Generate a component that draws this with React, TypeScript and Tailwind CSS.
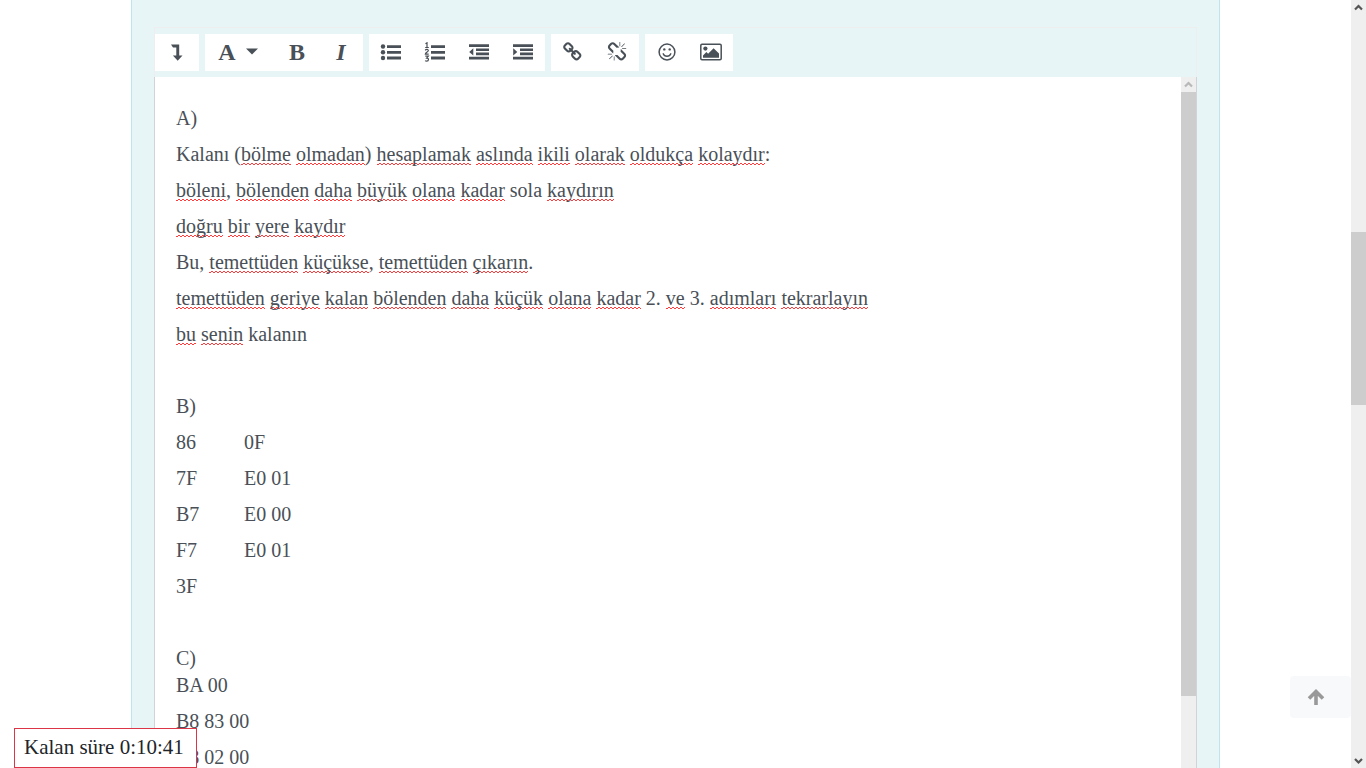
import type { ReactNode } from 'react';

const LINK_PATH =
  'M1456 1216q0-40-28-68l-208-208q-28-28-68-28-42 0-72 32 3 3 19 18.5t21.5 21.5 15 19 13 25.5 3.5 27.5q0 40-28 68t-68 28q-15 0-27.5-3.5t-25.5-13-19-15-21.5-21.5-18.5-19q-33 31-33 73 0 40 28 68l206 207q27 27 68 27 40 0 68-26l147-146q28-28 28-67zm-703-705q0-40-28-68l-206-207q-28-28-68-28-39 0-68 27l-147 146q-28 28-28 67 0 40 28 68l208 208q27 27 68 27 42 0 72-31-3-3-19-18.5t-21.5-21.5-15-19-13-25.5-3.5-27.5q0-40 28-68t68-28q15 0 27.5 3.5t25.5 13 19 15 21.5 21.5 18.5 19q33-31 33-73zm895 705q0 120-85 203l-147 146q-83 83-203 83-121 0-204-85l-206-207q-83-83-83-203 0-123 88-209l-88-88q-86 88-208 88-120 0-204-84l-208-208q-84-84-84-204t85-203l147-146q83-83 203-83 121 0 204 85l206 207q83 83 83 203 0 123-88 209l88 88q86-88 208-88 120 0 204 84l208 208q84 84 84 204z';
const UNLINK_PATH =
  'M503 1271l-256 256q-10 9-23 9-12 0-23-9-9-10-9-23t9-23l256-256q10-9 23-9t23 9q9 10 9 23t-9 23zm169 41v320q0 14-9 23t-23 9-23-9-9-23v-320q0-14 9-23t23-9 23 9 9 23zm-224-224q0 14-9 23t-23 9h-320q-14 0-23-9t-9-23 9-23 23-9h320q14 0 23 9t9 23zm1264 128q0 120-85 203l-147 146q-83 83-203 83-121 0-204-85l-334-335q-21-21-42-56l239-18 273 274q27 27 68 27.5t68-26.5l147-146q28-28 28-67 0-40-28-68l-274-275 18-239q35 21 56 42l336 336q84 86 84 204zm-617-724l-239 18-273-274q-28-28-68-28-39 0-68 27l-147 146q-28 28-28 67 0 40 28 68l274 274-18 240q-35-21-56-42l-336-336q-84-86-84-204 0-120 85-203l147-146q83-83 203-83 121 0 204 85l334 335q21 21 42 56zm633 84q0 14-9 23t-23 9h-320q-14 0-23-9t-9-23 9-23 23-9h320q14 0 23 9t9 23zm-544-544v320q0 14-9 23t-23 9-23-9-9-23v-320q0-14 9-23t23-9 23 9 9 23zm407 151l-256 256q-11 9-23 9t-23-9q-9-10-9-23t9-23l256-256q10-9 23-9t23 9q9 10 9 23t-9 23z';

function Icon({ children, box = '0 0 22 20' }: { children: ReactNode; box?: string }) {
  return (
    <svg viewBox={box} className="h-5 w-[22px]" fill="currentColor" aria-hidden="true">
      {children}
    </svg>
  );
}

const ExpandIcon = () => (
  <Icon>
    <path d="M5 2.600h8.200v10.800h3.300l-4.800 5.400-4.800-5.400h3.400V5.400H7z" />
  </Icon>
);
const BulletsIcon = () => (
  <Icon>
    <circle cx="3" cy="4.500" r="2.200" />
    <circle cx="3" cy="10.200" r="2.200" />
    <circle cx="3" cy="16" r="2.200" />
    <path d="M7 3.200h14v2.800H7zM7 8.900h14v2.800H7zM7 14.600h14v2.800H7z" />
  </Icon>
);
const NumbersIcon = () => (
  <Icon>
    <path d="M7 3.200h14v2.800H7zM7 8.900h14v2.800H7zM7 14.600h14v2.800H7z" />
    <path
      d="M1.500 1.800 3 .8v4.700M1.200 5.500h3.600M1.200 8.400c.8-1.500 3.300-1.200 3.100.3-.1 1.100-2.900 1.600-3 3.500h3.400M1.300 14.200h3l-1.600 1.900c2.500-.1 2.200 3.100 0 3.100-.8 0-1.200-.2-1.600-.6"
      fill="none"
      stroke="currentColor"
      strokeWidth="1.200"
    />
  </Icon>
);
const OutdentIcon = () => (
  <Icon>
    <path d="M1 2.200h20v2.700H1zM8 6.400h13v2.700H8zM8 10.600h13v2.700H8zM1 14.800h20v2.700H1zM5.300 6.200v7.400L1.200 9.900z" />
  </Icon>
);
const IndentIcon = () => (
  <Icon>
    <path d="M1 2.200h20v2.700H1zM8 6.400h13v2.700H8zM8 10.600h13v2.700H8zM1 14.800h20v2.700H1zM1.200 6.200v7.400l4.100-3.700z" />
  </Icon>
);
const LinkIcon = () => (
  <Icon box="0 0 1792 1792">
    <path d={LINK_PATH} />
  </Icon>
);
const UnlinkIcon = () => (
  <Icon box="0 0 1792 1792">
    <path d={UNLINK_PATH} />
  </Icon>
);
const SmileIcon = () => (
  <Icon>
    <circle cx="11" cy="10" r="7.900" fill="none" stroke="currentColor" strokeWidth="1.500" />
    <circle cx="8.300" cy="7.400" r="1.200" />
    <circle cx="13.700" cy="7.400" r="1.200" />
    <path d="M7.200 11.800c1.200 3.300 6.400 3.300 7.600 0" fill="none" stroke="currentColor" strokeWidth="1.400" strokeLinecap="round" />
  </Icon>
);
const ImageIcon = () => (
  <Icon>
    <rect x=".800" y="2.200" width="20.400" height="15.600" rx="1.200" fill="none" stroke="currentColor" strokeWidth="1.500" />
    <circle cx="5.400" cy="6.600" r="2.100" />
    <path d="M3 15.700v-2.300l3.400-3.400 1.700 1.700L13.600 6.200 19 11.600v4.100z" />
  </Icon>
);

function ToolButton({ label, children }: { label: string; children: ReactNode }) {
  return (
    <button type="button" aria-label={label} className="flex h-[37px] w-11 items-center justify-center pb-0.5">
      {children}
    </button>
  );
}

function Toolbar() {
  return (
    <div className="flex h-[50px] gap-1.5 border border-b-0 border-[#eeeeee] pt-1.5 text-[#495057]">
      <div className="flex h-[37px] bg-white">
        <ToolButton label="Daha fazla düğme göster"><ExpandIcon /></ToolButton>
      </div>
      <div className="flex h-[37px] bg-white text-2xl font-bold">
        <button type="button" aria-label="Paragraf stilleri" className="flex h-[37px] w-[70px] items-center justify-center gap-2.5 pr-1 pb-0.5">
          <span>A</span>
          <svg viewBox="0 0 12 7" className="h-[7px] w-3" fill="currentColor" aria-hidden="true">
            <path d="M0 .500h12L6 6.500z" />
          </svg>
        </button>
        <ToolButton label="Kalın">B</ToolButton>
        <ToolButton label="İtalik"><span className="italic">I</span></ToolButton>
      </div>
      <div className="flex h-[37px] bg-white">
        <ToolButton label="Sırasız liste"><BulletsIcon /></ToolButton>
        <ToolButton label="Sıralı liste"><NumbersIcon /></ToolButton>
        <ToolButton label="Girintiyi azalt"><OutdentIcon /></ToolButton>
        <ToolButton label="Girintiyi artır"><IndentIcon /></ToolButton>
      </div>
      <div className="flex h-[37px] bg-white">
        <ToolButton label="Bağlantı"><LinkIcon /></ToolButton>
        <ToolButton label="Bağlantıyı kaldır"><UnlinkIcon /></ToolButton>
      </div>
      <div className="flex h-[37px] bg-white">
        <ToolButton label="Emoji seçici"><SmileIcon /></ToolButton>
        <ToolButton label="Resim ekle"><ImageIcon /></ToolButton>
      </div>
    </div>
  );
}

// Words wrapped in square brackets carry the spell-check underline.
const PROSE = [
  'A)',
  'Kalanı ([bölme] [olmadan]) [hesaplamak] [aslında] [ikili] [olarak] [oldukça] [kolaydır]:',
  '[böleni], [bölenden] [daha] [büyük] [olana] [kadar] sola [kaydırın]',
  '[doğru] [bir] [yere] [kaydır]',
  'Bu, [temettüden] [küçükse], [temettüden] [çıkarın].',
  '[temettüden] [geriye] [kalan] [bölenden] [daha] [küçük] [olana] [kadar] 2. [ve] 3. [adımları] [tekrarlayın]',
  '[bu] [senin] kalanın',
  '\u00a0',
  'B)',
];

const CODES = [
  ['86', '0F'],
  ['7F', 'E0 01'],
  ['B7', 'E0 00'],
  ['F7', 'E0 01'],
  ['3F', ''],
];

function Spelled({ text }: { text: string }) {
  return text.split(/(\[[^\]]+\])/).map((part, i) =>
    part.startsWith('[') ? (
      <span
        key={i}
        className="bg-[linear-gradient(90deg,#ff3b3b_50%,transparent_50%),linear-gradient(90deg,transparent_50%,#ff3b3b_50%)] bg-[length:4px_1px,4px_1px] bg-[position:0_100%,0_calc(100%-1px)] bg-repeat-x"
      >
        {part.slice(1, -1)}
      </span>
    ) : (
      part
    ),
  );
}

function Chevron({ down = false, className }: { down?: boolean; className: string }) {
  return (
    <svg viewBox="0 0 15 15" className={className} fill="none" stroke="currentColor" strokeWidth="2.200" aria-hidden="true">
      <path d={down ? 'M4 6l3.500 3.500L11 6' : 'M4 9.500 7.500 6 11 9.500'} />
    </svg>
  );
}

export default function App() {
  return (
    <div className="relative flex h-screen overflow-hidden bg-white font-['Georgia','Liberation_Serif',serif] text-[#495057]">
      <main className="flex min-w-0 flex-1 justify-center">
        <section className="flex w-full max-w-[1089px] flex-col border-x border-[#bee5eb] bg-[#e7f5f6] px-[22px] pt-[27px]">
          <Toolbar />
          <div className="flex min-h-0 flex-1 border-x border-[#ced4da] bg-white">
            <div
              role="textbox"
              aria-multiline="true"
              aria-label="Yanıt metni"
              className="min-w-0 flex-1 overflow-hidden px-[21px] pt-7 text-[20px] leading-[27px]"
            >
              {PROSE.map((line, i) => (
                <p key={i} className="mb-[9px]"><Spelled text={line} /></p>
              ))}
              {CODES.map(([address, bytes]) => (
                <p key={address} className="mb-[9px] flex">
                  <span className="w-[68px]">{address}</span>
                  <span>{bytes}</span>
                </p>
              ))}
              <p className="mb-[9px]">&nbsp;</p>
              <p className="mb-[9px]">C)<br />BA 00</p>
              <p className="mb-[9px]">B8 83 00</p>
              <p className="mb-[9px]">B8 02 00</p>
            </div>
            <div className="flex w-[15px] flex-col bg-[#efefef]">
              <Chevron className="h-[15px] w-[15px] text-[#b8b8b8]" />
              <div className="h-[604px] bg-[#cdcdcd]" />
            </div>
          </div>
        </section>
      </main>

      <div className="flex w-[15px] flex-col bg-[#efefef]">
        <Chevron className="h-[15px] w-[15px] text-[#555555]" />
        <div className="mt-[217px] h-[173px] bg-[#cdcdcd]" />
        <Chevron down className="mt-auto h-[15px] w-[15px] text-[#555555]" />
      </div>

      <button
        type="button"
        aria-label="Başa dön"
        className="absolute right-[15px] bottom-[50px] flex h-[42px] w-[61px] items-center rounded bg-[#f8f9fa] pl-[17px] text-[#999999]"
      >
        <svg viewBox="0 0 18 18" className="h-[18px] w-[18px]" fill="none" stroke="currentColor" strokeWidth="3.600" aria-hidden="true">
          <path d="M9 17V4M2 10.500l7-7 7 7" />
        </svg>
      </button>

      <div role="timer" className="absolute bottom-0 left-[14px] flex h-10 w-[183px] items-center border border-[#dc3545] bg-white pl-[9px] text-[21px] text-[#212529]">
        Kalan süre 0:10:41
      </div>
    </div>
  );
}
